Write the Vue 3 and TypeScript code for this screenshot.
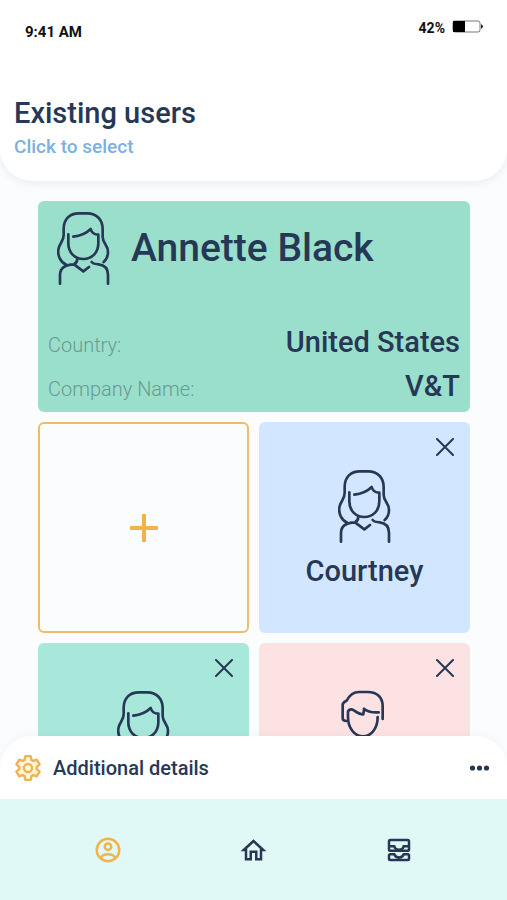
<script setup lang="ts">
import { ref } from 'vue'

type Portrait = 'woman' | 'man'
type Tone = 'blue' | 'mint' | 'rose'

interface UserCard {
  id: number
  name: string
  portrait: Portrait
  tone: Tone
}

const selected = {
  name: 'Annette Black',
  details: [
    { label: 'Country:', value: 'United States' },
    { label: 'Company Name:', value: 'V&T' },
  ],
}

const users = ref<UserCard[]>([
  { id: 1, name: 'Courtney', portrait: 'woman', tone: 'blue' },
  { id: 2, name: '', portrait: 'woman', tone: 'mint' },
  { id: 3, name: '', portrait: 'man', tone: 'rose' },
])

function removeUser(id: number): void {
  users.value = users.value.filter((user) => user.id !== id)
}
</script>

<template>
  <div class="screen">
    <svg class="symbols" aria-hidden="true">
      <symbol id="woman" viewBox="53 118 162 222">
        <path d="M82 280C62 272 55 250 57 234C60 214 73 210 73 190V172C73 142 92 125 118 125H144C172 125 190 145 190 172V196C190 214 206 220 206 240C206 252 201 264 193 271" />
        <path d="M102 195C120 193 140 186 154 172C157 183 162 189 177 189V215C177 243 158 262 132 262S87 243 87 215V188" />
        <path d="M114 262C113 272 109 276 104 278C76 279 62 288 62 310V336M105 279L132 299L149 286" />
        <path d="M157 271C160 277 167 277 178 278C196 280 206 290 206 310V336" />
      </symbol>
      <symbol id="man" viewBox="23 151 162 222">
        <path d="M48 244C41 244 37 241 37 235V196C37 188 42 186 49 183C58 166 70 157 86 157H112C142 157 157 175 157 200V238" />
        <path d="M145 218C128 219 112 217 101 207C101 213 100 219 99 224C90 224 80 219 72 213C64 206 53 210 53 218V232C53 265 72 290 98 290S142 265 142 232" />
        <path d="M82 290C81 302 77 307 72 310C44 312 32 322 32 343V369M72 311L98 332L124 311" />
        <path d="M114 290C115 302 119 307 124 310C152 312 170 322 170 343V369" />
      </symbol>
    </svg>

    <header class="top">
      <div class="status">
        <span class="time">9:41 AM</span>
        <span class="power">
          42%
          <svg class="battery" viewBox="0 0 31 14" aria-hidden="true">
            <rect x="1" y="1" width="27" height="11" rx="2" fill="#fff" stroke="#777" />
            <path d="M1 1H13V12H1Z" fill="#000" />
            <path d="M29 4L31 6V7L29 9Z" fill="#222" />
          </svg>
        </span>
      </div>
      <div class="heading">
        <h1>Existing users</h1>
        <p>Click to select</p>
      </div>
    </header>

    <main class="cards">
      <section class="card selected">
        <div class="identity">
          <svg class="portrait" aria-hidden="true"><use href="#woman" /></svg>
          <h2>{{ selected.name }}</h2>
        </div>
        <dl>
          <div v-for="item in selected.details" :key="item.label" class="detail">
            <dt>{{ item.label }}</dt>
            <dd>{{ item.value }}</dd>
          </div>
        </dl>
      </section>

      <button class="card add" type="button" aria-label="Add user">
        <svg viewBox="0 0 30 30" aria-hidden="true"><path d="M15 1V29M1 15H29" /></svg>
      </button>

      <article v-for="user in users" :key="user.id" class="card user" :class="user.tone">
        <button class="remove" type="button" aria-label="Remove user" @click="removeUser(user.id)">
          <svg viewBox="0 0 18 18" aria-hidden="true"><path d="M1 1L17 17M17 1L1 17" /></svg>
        </button>
        <svg class="portrait" aria-hidden="true"><use :href="'#' + user.portrait" /></svg>
        <h3 v-if="user.name">{{ user.name }}</h3>
      </article>
    </main>

    <section class="sheet">
      <svg class="gear" viewBox="1 1 22 22" aria-hidden="true">
        <path d="M19.43 12.98c.04-.32.07-.64.07-.98 0-.34-.03-.66-.07-.98l2.11-1.65c.19-.15.24-.42.12-.64l-2-3.46c-.09-.16-.26-.25-.44-.25-.06 0-.12.01-.17.03l-2.49 1c-.52-.4-1.08-.73-1.69-.98l-.38-2.65C14.46 2.18 14.25 2 14 2h-4c-.25 0-.46.18-.49.42l-.38 2.65c-.61.25-1.17.59-1.69.98l-2.49-1c-.06-.02-.12-.03-.18-.03-.17 0-.34.09-.43.25l-2 3.46c-.13.22-.07.49.12.64l2.11 1.65c-.04.32-.07.65-.07.98 0 .33.03.66.07.98l-2.11 1.65c-.19.15-.24.42-.12.64l2 3.46c.09.16.26.25.44.25.06 0 .12-.01.17-.03l2.49-1c.52.4 1.08.73 1.69.98l.38 2.65c.03.24.24.42.49.42h4c.25 0 .46-.18.49-.42l.38-2.65c.61-.25 1.17-.59 1.69-.98l2.49 1c.06.02.12.03.18.03.17 0 .34-.09.43-.25l2-3.46c.12-.22.07-.49-.12-.64l-2.11-1.65z" />
        <circle cx="12" cy="12" r="3.4" />
      </svg>
      <h2>Additional details</h2>
      <button class="more" type="button" aria-label="More">
        <svg viewBox="0 0 20 6" aria-hidden="true">
          <circle cx="3" cy="3" r="2.6" /><circle cx="10" cy="3" r="2.6" /><circle cx="17" cy="3" r="2.6" />
        </svg>
      </button>
    </section>

    <nav class="tabs">
      <a class="active" href="#users" aria-label="Users">
        <svg viewBox="0 0 24 24" aria-hidden="true">
          <circle cx="12" cy="12" r="9" /><circle cx="12" cy="9.3" r="2.6" />
          <path d="M6 18.6C7 16.4 9.4 15.4 12 15.4S17 16.4 18 18.6" />
        </svg>
      </a>
      <a href="#home" aria-label="Home">
        <svg viewBox="0 0 24 24" aria-hidden="true">
          <path d="M4.6 12L12.4 4.8L20.2 12H18.4V19.4H14.6V13.4H10.2V19.4H6.4V12Z" />
        </svg>
      </a>
      <a href="#inbox" aria-label="Inbox">
        <svg viewBox="0 0 24 24" aria-hidden="true">
          <rect x="4" y="4" width="16" height="8.6" rx="1" />
          <path d="M4 9H8.2C8.6 10.8 10 11.8 12 11.8S15.4 10.8 15.8 9H20" />
          <path d="M5 15.4H8.2C8.8 17 10 17.9 12 17.9S15.2 17 15.8 15.4H19A1 1 0 0 1 20 16.4V19A1 1 0 0 1 19 20H5A1 1 0 0 1 4 19V16.4A1 1 0 0 1 5 15.4Z" />
        </svg>
      </a>
    </nav>
  </div>
</template>

<style>
body {
  margin: 0;
}
</style>

<style scoped>
.screen {
  display: flex;
  flex-direction: column;
  height: 100vh;
  overflow: hidden;
  background: #fafcfe;
  color: #263855;
  font-family: Roboto, "Liberation Sans", sans-serif;
  font-weight: 500;
}

h1, h2, h3, p, dl, dd {
  margin: 0;
  font-weight: 500;
}

button {
  padding: 0;
  border: 0;
  background: none;
  color: inherit;
  cursor: pointer;
}

svg {
  display: block;
  fill: none;
  stroke: currentColor;
}

.symbols {
  position: absolute;
  width: 0;
  height: 0;
}

.top {
  flex: none;
  position: relative;
  z-index: 1;
  padding-bottom: 22px;
  border-radius: 0 0 32px 32px;
  background: #fff;
  box-shadow: 0 2px 8px rgba(40, 60, 80, 0.08);
}

.status {
  display: flex;
  justify-content: space-between;
  padding: 20px 24px 0 25px;
  color: #111;
  font-size: 14px;
  font-weight: 700;
  line-height: 16px;
}

.time {
  padding-top: 4px;
  font-size: 15px;
}

.power {
  display: flex;
  gap: 7px;
}

.battery {
  width: 31px;
  height: 14px;
  stroke: none;
}

.heading {
  padding: 56px 14px 0;
}

h1 {
  font-size: 29px;
  line-height: 34px;
}

.heading p {
  padding-top: 5px;
  color: #7cb0e2;
  font-size: 19px;
  line-height: 24px;
}

.cards {
  flex: 1;
  min-height: 0;
  overflow: hidden;
  display: grid;
  grid-template-columns: 1fr 1fr;
  align-content: start;
  gap: 10px;
  padding: 20px 37px 0 38px;
}

.card {
  box-sizing: border-box;
  border-radius: 6px;
}

.selected {
  grid-column: 1 / -1;
  display: flex;
  flex-direction: column;
  justify-content: space-between;
  min-height: 211px;
  padding: 10px 10px 4px;
  background: #9adfcb;
}

.identity {
  display: flex;
  align-items: center;
  gap: 20px;
  padding-left: 9px;
}

.portrait {
  flex: none;
  width: 54px;
  height: 74px;
  stroke-width: 8;
  stroke-linecap: round;
  stroke-linejoin: round;
}

.identity h2 {
  font-size: 39px;
  line-height: 48px;
}

.detail {
  display: flex;
  justify-content: space-between;
  align-items: baseline;
}

dt {
  color: #6c9a91;
  font-size: 20px;
  font-weight: 300;
  line-height: 24px;
}

dd {
  font-size: 29px;
  line-height: 44px;
}

.add {
  display: grid;
  place-items: center;
  aspect-ratio: 1;
  border: 2px solid #f1bd63;
  color: #f1b44c;
}

.add svg {
  width: 30px;
  height: 30px;
  stroke-width: 4;
}

.user {
  position: relative;
  display: flex;
  flex-direction: column;
  align-items: center;
  gap: 10px;
  aspect-ratio: 1;
  padding-top: 47px;
}

.blue {
  background: #d2e6ff;
}

.mint {
  background: #a7e8da;
}

.rose {
  background: #fde2e3;
}

.remove {
  position: absolute;
  top: 16px;
  right: 16px;
}

.remove svg {
  width: 18px;
  height: 18px;
  stroke-width: 2;
  stroke-linecap: round;
}

h3 {
  font-size: 29px;
  line-height: 36px;
}

.sheet {
  flex: none;
  position: relative;
  z-index: 1;
  display: flex;
  align-items: center;
  gap: 12px;
  min-height: 63px;
  padding: 0 17px 0 15px;
  border-radius: 32px 32px 0 0;
  background: #fff;
  box-shadow: 0 -2px 8px rgba(40, 60, 80, 0.03);
}

.gear {
  width: 26px;
  height: 26px;
  fill: #fff6d8;
  stroke: #efb254;
  stroke-width: 2;
}

.sheet h2 {
  flex: 1;
  font-size: 20px;
  line-height: 24px;
}

.more svg {
  width: 21px;
  height: 6px;
  fill: currentColor;
  stroke: none;
}

.tabs {
  flex: none;
  position: relative;
  z-index: 1;
  display: grid;
  grid-template-columns: repeat(3, 1fr);
  min-height: 101px;
  padding: 0 35px;
  box-sizing: border-box;
  background: #e0f9f6;
}

.tabs a {
  display: grid;
  place-items: center;
  color: inherit;
}

.tabs .active {
  color: #f1b44c;
}

.tabs svg {
  width: 30px;
  height: 30px;
  stroke-width: 2;
}
</style>
